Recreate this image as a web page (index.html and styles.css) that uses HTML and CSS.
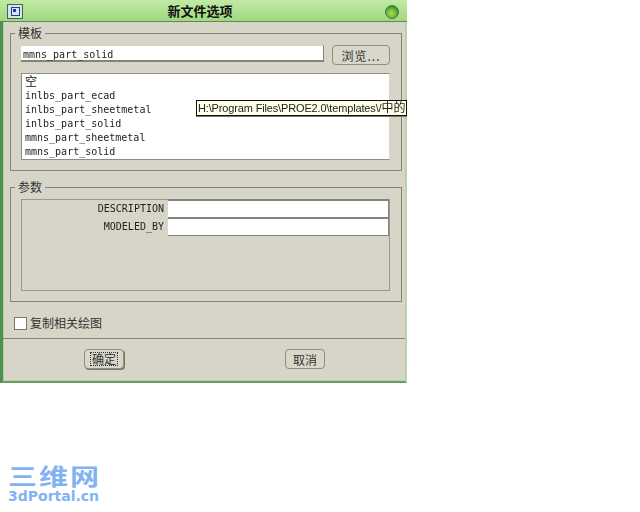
FILE: index.html
```html
<!DOCTYPE html>
<html lang="zh">
<head>
<meta charset="utf-8">
<title>新文件选项</title>
<link rel="stylesheet" href="styles.css">
</head>
<body>
<div class="dialog">
  <header class="titlebar">
    <svg class="app-icon" width="16" height="15" viewBox="0 0 16 15"><rect x="0.5" y="0.5" width="15" height="14" fill="#d9e4dc" stroke="#3b6a5c"/><rect x="4" y="3" width="9" height="9" fill="#1d3fa0"/><rect x="5" y="4" width="7" height="7" fill="#dbe6f2"/><rect x="6" y="5" width="3" height="3" fill="#1d3fa0"/></svg>
    <span class="title">新文件选项</span>
    <svg class="orb" width="16" height="16" viewBox="0 0 16 16"><defs><radialGradient id="g" cx="0.45" cy="0.6" r="0.6"><stop offset="0" stop-color="#a6e05a"/><stop offset="0.6" stop-color="#6cb82e"/><stop offset="1" stop-color="#2f7a3a"/></radialGradient></defs><circle cx="8" cy="8" r="6.5" fill="url(#g)" stroke="#3f7f44"/></svg>
  </header>
  <div class="body">
    <fieldset class="group group-template">
      <legend>模板</legend>
      <div class="file-row">
        <div class="field"><span class="mono">mmns_part_solid</span></div>
        <div class="btn browse">浏览...</div>
      </div>
      <ul class="list">
        <li class="cjk-item">空</li>
        <li class="mono">inlbs_part_ecad</li>
        <li class="mono">inlbs_part_sheetmetal</li>
        <li class="mono">inlbs_part_solid</li>
        <li class="mono">mmns_part_sheetmetal</li>
        <li class="mono">mmns_part_solid</li>
      </ul>
    </fieldset>
    <fieldset class="group group-params">
      <legend>参数</legend>
      <div class="params">
        <div class="param"><span class="param-name">DESCRIPTION</span><span class="param-value"></span></div>
        <div class="param param-last"><span class="param-name">MODELED_BY</span><span class="param-value"></span></div>
      </div>
    </fieldset>
    <label class="check"><span class="box"></span><span>复制相关绘图</span></label>
  </div>
  <footer class="actions">
    <div class="btn ok"><span class="focus">确定</span></div>
    <div class="btn cancel">取消</div>
  </footer>
</div>
<div class="tooltip">H:\Program Files\PROE2.0\templates\/<span class="tip-cjk">中的</span></div>
<div class="logo"><div class="logo-cn">三维网</div><div class="logo-en">3dPortal.cn</div></div>
</body>
</html>
```
FILE: styles.css
```css
html, body { margin: 0; padding: 0; background: #fff; }
body { width: 640px; height: 512px; position: relative; overflow: hidden; font-family: "DejaVu Sans Mono", monospace; color: #222; }
.dialog { width: 407px; height: 383px; box-sizing: border-box; background: #d6d5c8; border-left: 3px solid #4f8f50; border-right: 2px solid #b8d4a6; border-bottom: 2px solid #6a9c62; box-shadow: inset 1px 0 0 #a9cf9a, inset 0 -1px 0 #b8d8a8; display: flex; flex-direction: column; }
.titlebar { height: 22px; box-sizing: border-box; margin-left: -3px; margin-right: -2px; flex: none; display: flex; align-items: center; justify-content: center; padding-right: 7px; border-bottom: 1px solid #5f8a58; background: linear-gradient(#c2eaa4, #a0d880); position: relative; }
.app-icon { position: absolute; left: 7px; top: 4px; }
.orb { position: absolute; right: 7px; top: 4px; }
.title { font: bold 13px "Noto Sans CJK SC", sans-serif; color: #111; }
.body { flex: 1; display: flex; flex-direction: column; padding: 4px 3px 0 7px; }
.group { margin: 0; padding: 0 11px 0 10px; border: 1px solid #85847a; box-sizing: border-box; min-width: 0; }
legend { font: 12px/14px "Noto Sans CJK SC", sans-serif; color: #333; margin-left: -6px; padding: 0 3px; }
.group-template { height: 145px; padding-top: 5px; }
.file-row { display: flex; align-items: flex-start; gap: 8px; }
.field { width: 303px; height: 17px; box-sizing: border-box; background: #fff; border-bottom: 2px solid #85847a; border-right: 1px solid #85847a; border-top: 1px solid #cfcfc4; font-size: 10px; line-height: 17px; padding-left: 2px; }
.mono { display: block; will-change: opacity; }
.btn { box-sizing: border-box; border: 1px solid #8e8d82; border-radius: 4px; font: 12px "Noto Sans CJK SC", sans-serif; color: #333; display: flex; align-items: center; justify-content: center; background: #d8d7ca; }
.browse { width: 58px; height: 20px; letter-spacing: 1px; }
.list { list-style: none; margin: 8px 0 0; padding: 0 0 0 3px; height: 87px; box-sizing: border-box; background: #fff; border: 1px solid #8e8d82; border-right-color: #d6d5c8; font-size: 10px; line-height: 14px; }
.cjk-item { font: 12px/14px "Noto Sans CJK SC", sans-serif; height: 15px; }
.group-params { height: 122px; margin-top: 9px; padding-top: 5px; }
.params { height: 92px; border: 1px solid #9a998e; box-sizing: border-box; }
.param { display: flex; height: 18px; font-size: 10px; line-height: 18px; }
.param:first-child { margin-top: -1px; }
.param-last { height: 19px; }
.param-name { width: 146px; text-align: right; padding: 1px 4px 0 0; box-sizing: border-box; will-change: opacity; }
.param-value { flex: 1; background: #fff; border-top: 2px solid #85847a; border-right: 1px solid #85847a; }
.param-last .param-value { border-bottom: 1px solid #85847a; }
.check { display: flex; align-items: center; gap: 3px; margin-top: 14px; margin-left: 4px; font: 12px/14px "Noto Sans CJK SC", sans-serif; color: #333; }
.box { width: 13px; height: 13px; box-sizing: border-box; background: #fff; border: 1px solid #77776c; }
.actions { height: 43px; border-top: 1px solid #85847a; flex: none; display: flex; box-sizing: border-box; padding: 10px 0 0 81px; gap: 161px; align-items: flex-start; }
.ok { width: 40px; height: 20px; box-shadow: 1px 1px 0 #77776c; }
.focus { border: 1px dotted #333; line-height: 12px; padding: 0 1px; }
.cancel { width: 40px; height: 20px; }
.tooltip { position: absolute; left: 196px; top: 100px; width: 211px; height: 16px; box-sizing: border-box; border: 1px solid #111; background: #ffffe8; box-shadow: 0 1px 0 #777; font: 11px/14px "Liberation Sans", "Noto Sans CJK SC", sans-serif; letter-spacing: -0.15px; color: #222; white-space: nowrap; padding-left: 1px; }
.tip-cjk { font-size: 12px; letter-spacing: 0; }
.logo { position: absolute; left: 8px; top: 462px; color: #82b2f2; width: 92px; }
.logo-cn { font: bold 29px/26px "Noto Sans CJK SC", sans-serif; white-space: nowrap; letter-spacing: 2px; height: 24px; transform: scaleY(0.8); transform-origin: 50% 50%; }
.logo-en { font: bold 14px/14px "DejaVu Sans", sans-serif; white-space: nowrap; margin-top: 3px; }
```
